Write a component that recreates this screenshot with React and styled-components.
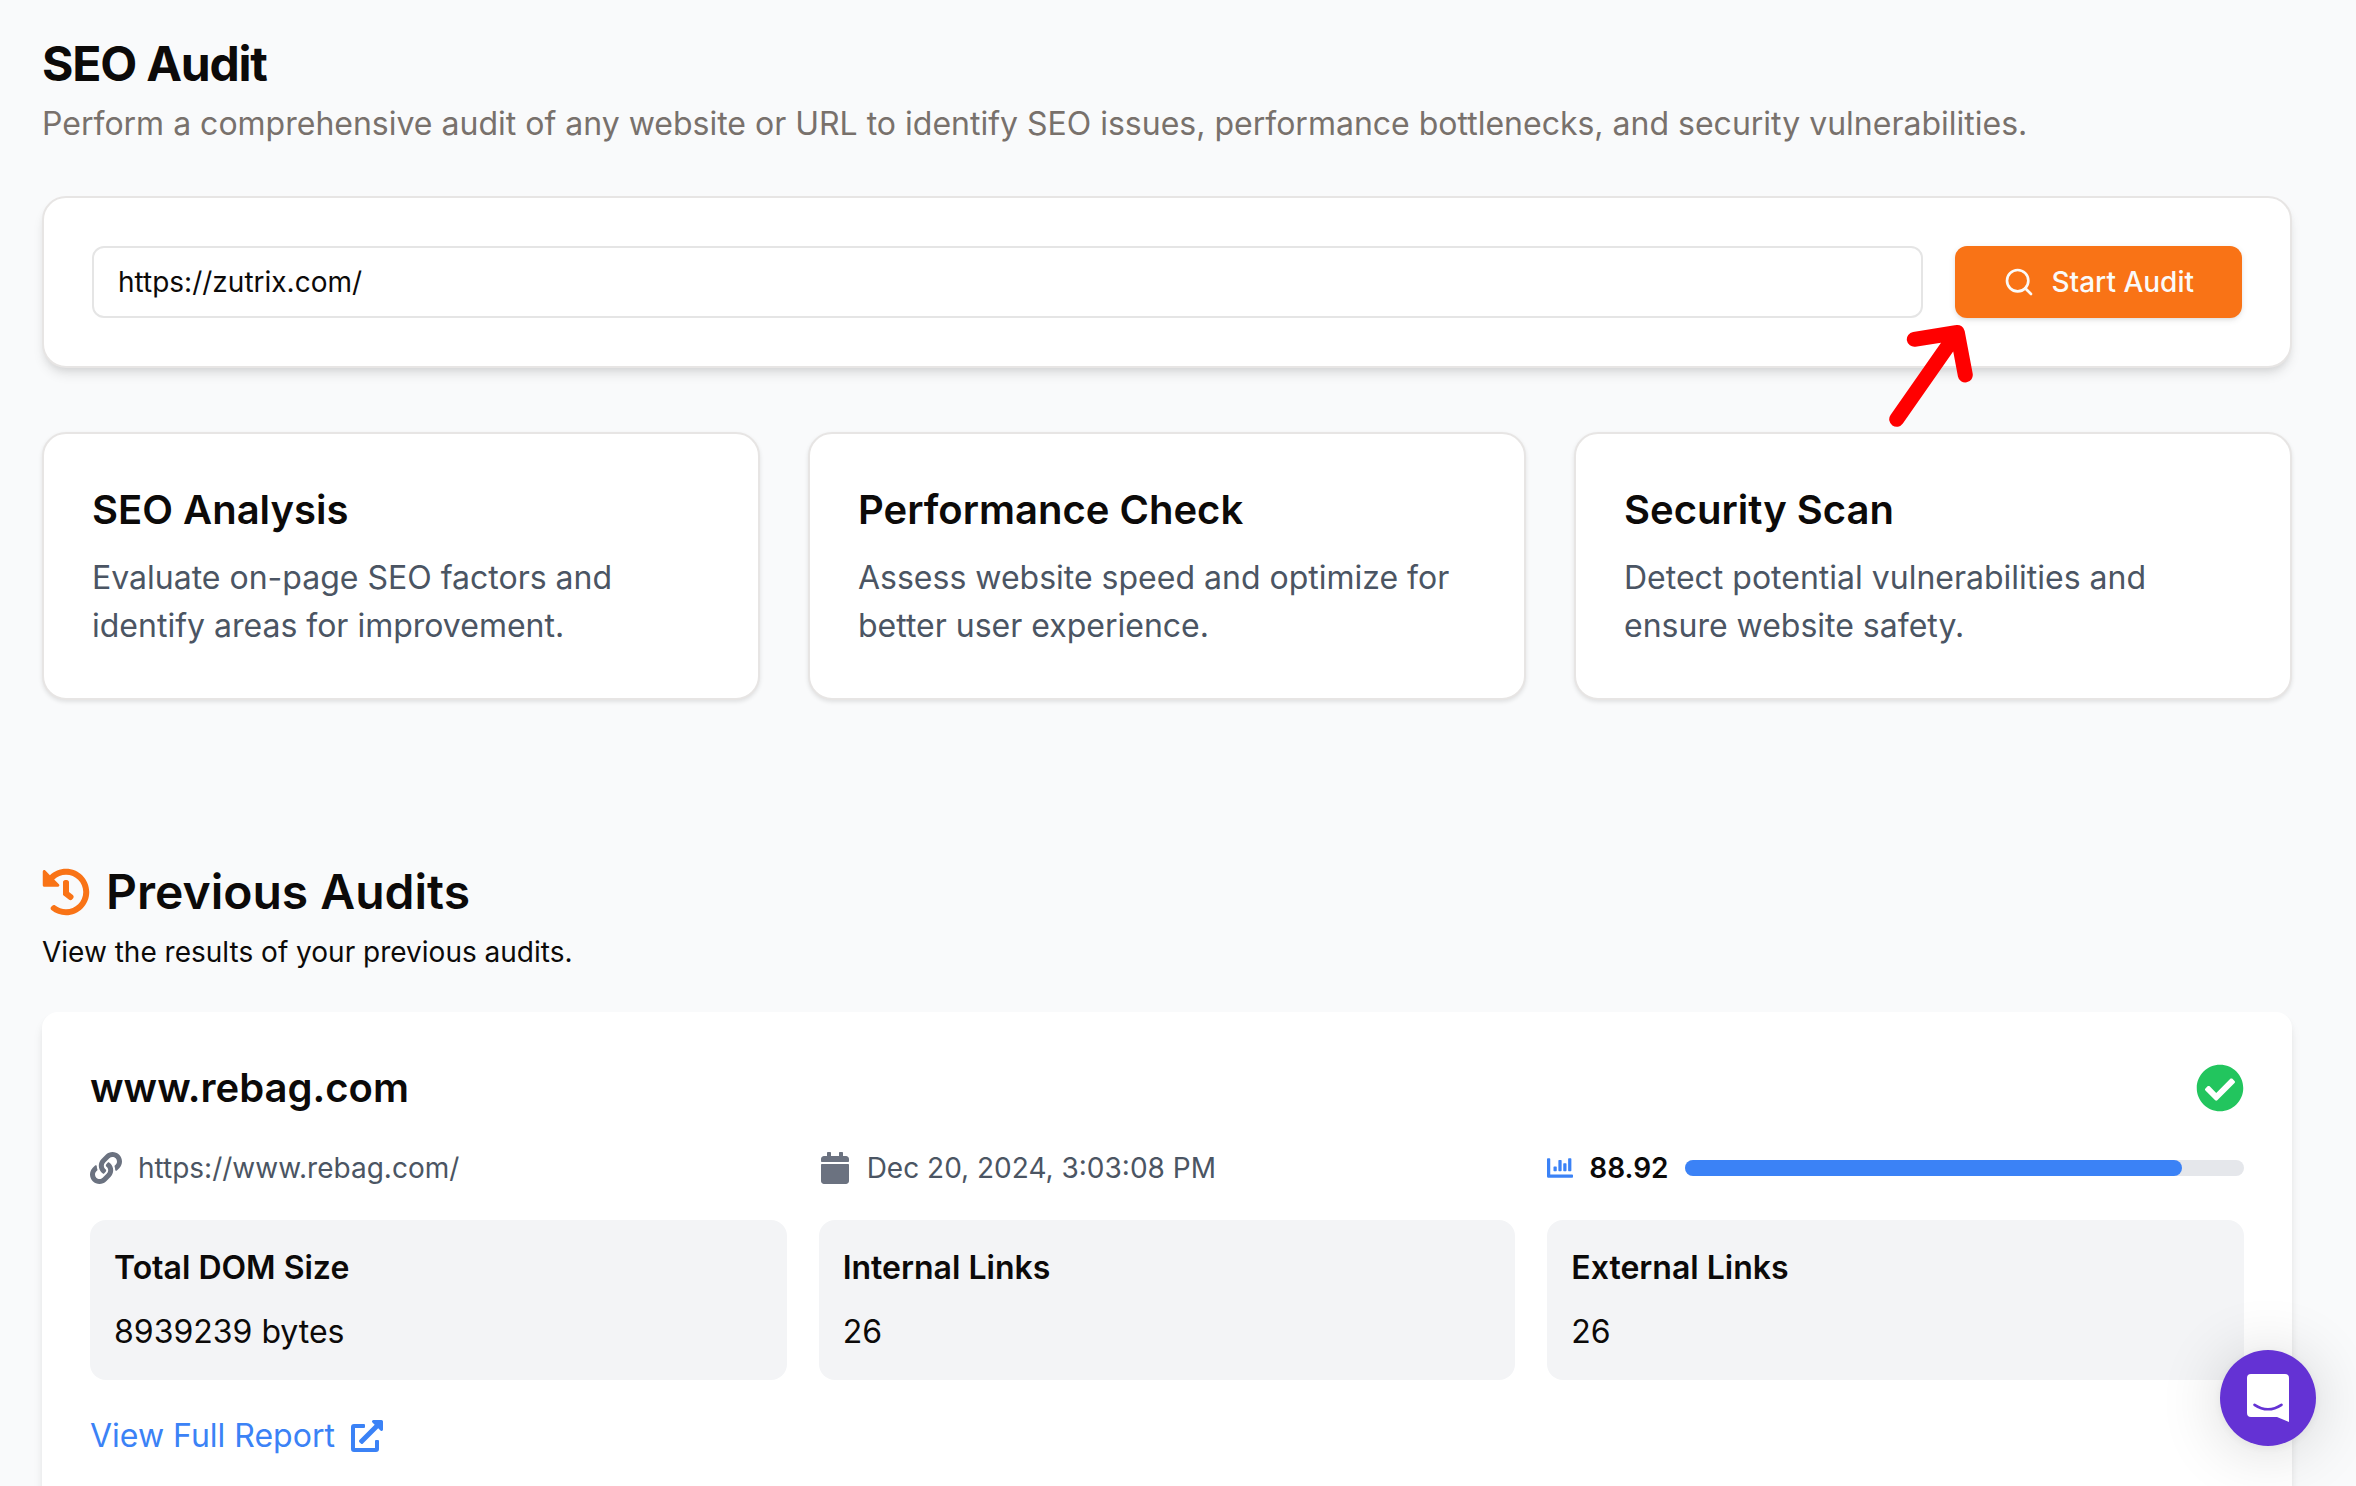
import React, { useState } from 'react';
import styled, { createGlobalStyle } from 'styled-components';
import { Search } from 'lucide-react';
import {
  FaHistory,
  FaLink,
  FaCalendar,
  FaChartBar,
  FaCheckCircle,
  FaExternalLinkAlt,
} from 'react-icons/fa';

const GlobalStyle = createGlobalStyle`
  * {
    box-sizing: border-box;
  }

  body {
    margin: 0;
    background: #f9fafb;
    color: #0c0a09;
    font-family: Inter, 'Liberation Sans', sans-serif;
    font-size: 32px;
    line-height: 48px;
  }

  h1, h2, h3, p, dl, dt, dd {
    margin: 0;
  }
`;

const Page = styled.main`
  height: 100vh;
  overflow: hidden;
  padding: 32px 64px 0 42px;
`;

const PageTitle = styled.h1`
  font-size: 48px;
  line-height: 64px;
  font-weight: 700;
  letter-spacing: -0.025em;
`;

const PageIntro = styled.p`
  margin-top: 4px;
  color: #78716c;
`;

const Card = styled.section`
  padding: 48px;
  background: #fff;
  border: 2px solid #e7e5e4;
  border-radius: 24px;
  box-shadow: 0 2px 4px rgba(0, 0, 0, 0.1);
`;

const AuditForm = styled(Card).attrs({ as: 'form' })`
  position: relative;
  display: flex;
  gap: 32px;
  margin: 48px 0 64px;
  box-shadow: 0 8px 12px -2px rgba(0, 0, 0, 0.1), 0 4px 8px -4px rgba(0, 0, 0, 0.1);
`;

const UrlInput = styled.input`
  flex: 1;
  min-width: 0;
  height: 72px;
  padding: 0 24px;
  border: 2px solid #e5e5e5;
  border-radius: 12px;
  background: #fff;
  color: #0c0a09;
  font: inherit;
  font-size: 28px;
`;

const StartButton = styled.button`
  display: flex;
  align-items: center;
  gap: 16px;
  height: 72px;
  padding: 0 48px;
  border: 0;
  border-radius: 12px;
  background: #f97316;
  color: #fafaf9;
  font: inherit;
  font-size: 28px;
  font-weight: 500;
  box-shadow: 0 2px 6px rgba(0, 0, 0, 0.1), 0 2px 4px -2px rgba(0, 0, 0, 0.1);
`;

const Arrow = styled.svg`
  position: absolute;
  right: 316px;
  top: 120px;
  width: 96px;
  height: 120px;
`;

const Features = styled.div`
  display: grid;
  grid-template-columns: repeat(3, 1fr);
  gap: 48px;
`;

const FeatureTitle = styled.h2`
  margin-bottom: 16px;
  font-size: 40px;
  line-height: 56px;
  font-weight: 600;
`;

const FeatureText = styled.p`
  color: #4b5563;
`;

const SectionTitle = styled.h2`
  display: flex;
  align-items: center;
  gap: 16px;
  margin-top: 160px;
  font-size: 48px;
  line-height: 64px;
  font-weight: 600;

  svg {
    color: #f97316;
  }
`;

const SectionText = styled.p`
  margin: 8px 0 40px;
  font-size: 28px;
  line-height: 40px;
`;

const AuditCard = styled.article`
  display: grid;
  gap: 32px;
  padding: 48px;
  background: #fff;
  border-radius: 16px;
  box-shadow: 0 8px 12px -2px rgba(0, 0, 0, 0.1), 0 4px 8px -4px rgba(0, 0, 0, 0.1);
`;

const AuditHeader = styled.header`
  display: flex;
  align-items: center;
  justify-content: space-between;
  font-size: 48px;
  color: #22c55e;
`;

const AuditName = styled.h3`
  color: #0c0a09;
  font-size: 40px;
  line-height: 56px;
  font-weight: 600;
`;

const Columns = styled.div`
  display: grid;
  grid-template-columns: repeat(3, 1fr);
  gap: 32px;
`;

const Meta = styled.div`
  display: flex;
  align-items: center;
  gap: 16px;
  color: #4b5563;
  font-size: 28px;
  line-height: 40px;

  svg {
    color: #6b7280;
    font-size: 32px;
  }
`;

const Score = styled(Meta)`
  color: #0c0a09;
  font-weight: 600;

  svg {
    width: 26px;
    color: #3b82f6;
  }
`;

const Track = styled.div`
  flex: 1;
  height: 16px;
  border-radius: 8px;
  background: #e5e7eb;
`;

const Fill = styled.div`
  height: 100%;
  border-radius: 8px;
  background: #3b82f6;
`;

const Stat = styled.dl`
  padding: 24px;
  border-radius: 16px;
  background: #f3f4f6;
`;

const StatLabel = styled.dt`
  margin-bottom: 16px;
  font-weight: 600;
`;

const ReportLink = styled.a`
  display: flex;
  align-items: center;
  gap: 16px;
  justify-self: start;
  color: #3b82f6;
  text-decoration: none;
`;

const ChatButton = styled.button`
  position: fixed;
  right: 40px;
  bottom: 40px;
  width: 96px;
  height: 96px;
  padding: 0;
  border: 0;
  border-radius: 50%;
  background: #6432d4;
  box-shadow: 0 2px 12px rgba(0, 0, 0, 0.06), 0 4px 64px rgba(0, 0, 0, 0.16);

  svg {
    display: block;
  }
`;

const features = [
  {
    title: 'SEO Analysis',
    text: 'Evaluate on-page SEO factors and identify areas for improvement.',
  },
  {
    title: 'Performance Check',
    text: 'Assess website speed and optimize for better user experience.',
  },
  {
    title: 'Security Scan',
    text: 'Detect potential vulnerabilities and ensure website safety.',
  },
];

const audit = {
  name: 'www.rebag.com',
  url: 'https://www.rebag.com/',
  date: 'Dec 20, 2024, 3:03:08 PM',
  score: 88.92,
  stats: [
    { label: 'Total DOM Size', value: '8939239 bytes' },
    { label: 'Internal Links', value: '26' },
    { label: 'External Links', value: '26' },
  ],
};

const App = () => {
  const [url, setUrl] = useState('https://zutrix.com/');

  return (
    <>
      <GlobalStyle />
      <Page>
        <PageTitle>SEO Audit</PageTitle>
        <PageIntro>
          Perform a comprehensive audit of any website or URL to identify SEO issues,
          performance bottlenecks, and security vulnerabilities.
        </PageIntro>

        <AuditForm onSubmit={(e) => e.preventDefault()}>
          <UrlInput
            aria-label="Website URL"
            value={url}
            onChange={(e) => setUrl(e.target.value)}
          />
          <StartButton type="submit">
            <Search size={32} />
            Start Audit
          </StartButton>
          <Arrow viewBox="0 0 96 120" aria-hidden="true">
            <path
              d="M18.7 101.3 L79.3 14.5 M36.3 21.3 L79.3 14.5 L87.3 57"
              fill="none"
              stroke="#f00"
              strokeWidth="15"
              strokeLinecap="round"
              strokeLinejoin="round"
            />
          </Arrow>
        </AuditForm>

        <Features>
          {features.map((feature) => (
            <Card key={feature.title}>
              <FeatureTitle>{feature.title}</FeatureTitle>
              <FeatureText>{feature.text}</FeatureText>
            </Card>
          ))}
        </Features>

        <SectionTitle>
          <FaHistory />
          Previous Audits
        </SectionTitle>
        <SectionText>View the results of your previous audits.</SectionText>

        <AuditCard>
          <AuditHeader>
            <AuditName>{audit.name}</AuditName>
            <FaCheckCircle />
          </AuditHeader>
          <Columns>
            <Meta>
              <FaLink />
              {audit.url}
            </Meta>
            <Meta>
              <FaCalendar />
              {audit.date}
            </Meta>
            <Score>
              <FaChartBar />
              {audit.score}
              <Track>
                <Fill style={{ width: `${audit.score}%` }} />
              </Track>
            </Score>
          </Columns>
          <Columns>
            {audit.stats.map((stat) => (
              <Stat key={stat.label}>
                <StatLabel>{stat.label}</StatLabel>
                <dd>{stat.value}</dd>
              </Stat>
            ))}
          </Columns>
          <ReportLink href="#report">
            View Full Report
            <FaExternalLinkAlt />
          </ReportLink>
        </AuditCard>
      </Page>

      <ChatButton aria-label="Open chat">
        <svg width="96" height="96" viewBox="0 0 96 96">
          <path
            d="M31 24h34q4 0 4 4v44l-12-5H31q-4 0-4-4V28q0-4 4-4z"
            fill="#fff"
          />
          <path
            d="M34.5 54.8q13.5 9 27 0"
            fill="none"
            stroke="#6432d4"
            strokeWidth="2.6"
            strokeLinecap="round"
          />
        </svg>
      </ChatButton>
    </>
  );
};

export default App;
